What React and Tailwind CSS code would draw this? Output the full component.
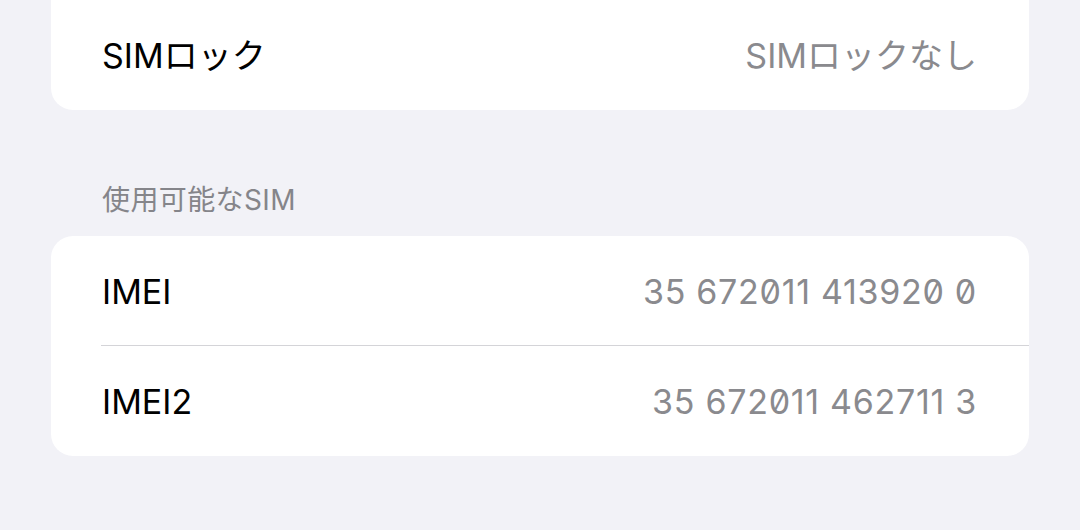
import React from "react";

const font = { fontFamily: 'Inter, "Noto Sans CJK JP", sans-serif' };

const Digits = ({ text }) =>
  text.split("").map((ch, i) =>
    ch === "0" ? (
      <span key={i} className="inline-block">
        0
      </span>
    ) : (
      ch
    )
  );

const Row = ({ label, value, numeric = false, divider = false }) => (
  <div className="relative flex h-[110px] items-center justify-between pl-[51px] pr-[52px]">
    <span className="text-[34px] text-black">{label}</span>
    <span
      className={
        numeric
          ? "text-[34px] text-[#8a8a8e] tracking-[0.7px] [font-feature-settings:'zero'_1,'calt'_0]"
          : "text-[34px] text-[#8a8a8e]"
      }
    >
      {numeric ? <Digits text={value} /> : value}
    </span>
    {divider && (
      <div className="absolute bottom-0 left-[50px] right-0 h-px bg-[#d4d4d8]" />
    )}
  </div>
);

export default function App() {
  return (
    <div
      className="h-[530px] w-[1080px] overflow-hidden bg-[#f2f2f7] px-[51px]"
      style={font}
    >
      {/* SIM lock card, top cut off */}
      <div className="-mt-[30px] rounded-[22px] bg-white pt-[30px]">
        <Row label="SIMロック" value="SIMロックなし" />
      </div>

      {/* available SIM section */}
      <div className="flex h-[126px] items-end pb-[15px] pl-[51px]">
        <span className="text-[28px] text-[#85858a] tracking-[0.4px]">使用可能なSIM</span>
      </div>

      <div className="overflow-hidden rounded-[22px] bg-white">
        <Row label="IMEI" value="35 672011 413920 0" numeric divider />
        <Row label="IMEI2" value="35 672011 462711 3" numeric />
      </div>
    </div>
  );
}
